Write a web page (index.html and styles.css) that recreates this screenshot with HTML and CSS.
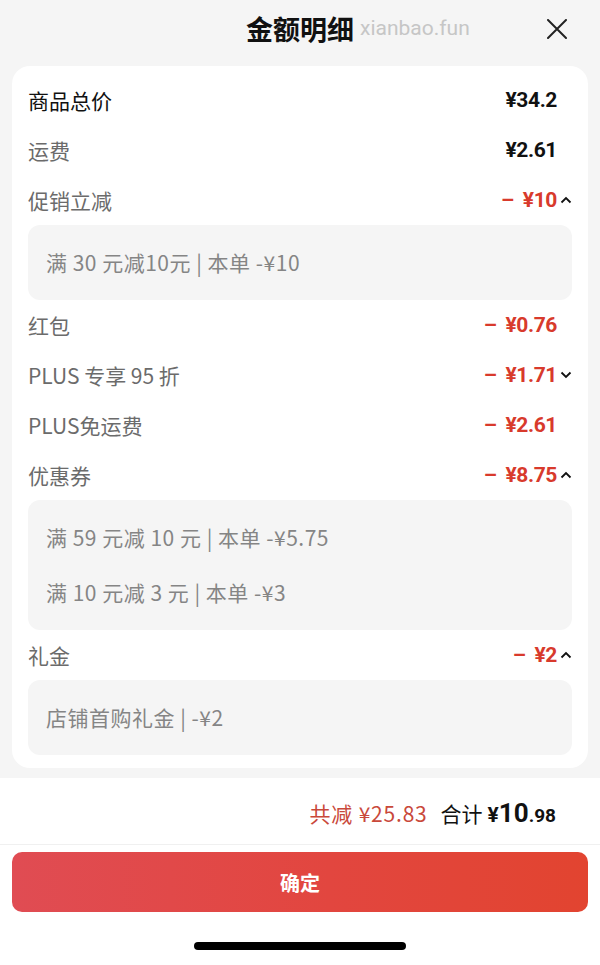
FILE: index.html
```html
<!DOCTYPE html>
<html lang="zh">
<head>
<meta charset="utf-8">
<link rel="stylesheet" href="styles.css">
</head>
<body>
<div class="sheet">
  <header class="head">
    <h1 class="title">金额明细</h1>
    <span class="watermark">xianbao.fun</span>
    <svg class="close" width="20" height="20" viewBox="0 0 20 20"><path d="M1 1L19 19M19 1L1 19" stroke="#222" stroke-width="2" fill="none" stroke-linecap="round"/></svg>
  </header>

  <section class="card">
    <div class="row"><span class="label dark">商品总价</span><span class="val">¥34.2</span><span class="chev"></span></div>
    <div class="row"><span class="label">运费</span><span class="val">¥2.61</span><span class="chev"></span></div>
    <div class="row"><span class="label">促销立减</span><span class="val red"><i class="minus">–</i>¥10</span><span class="chev"><svg width="12" height="8" viewBox="0 0 12 8"><path d="M1.5 6.5L6 2L10.5 6.5" stroke="#111" stroke-width="1.8" fill="none"/></svg></span></div>
    <div class="sub"><div class="item">满 30 元减10元 | 本单 -¥10</div></div>
    <div class="row"><span class="label">红包</span><span class="val red"><i class="minus">–</i>¥0.76</span><span class="chev"></span></div>
    <div class="row"><span class="label">PLUS 专享 95 折</span><span class="val red"><i class="minus">–</i>¥1.71</span><span class="chev"><svg width="12" height="8" viewBox="0 0 12 8"><path d="M1.5 1.5L6 6L10.5 1.5" stroke="#111" stroke-width="1.8" fill="none"/></svg></span></div>
    <div class="row"><span class="label">PLUS免运费</span><span class="val red"><i class="minus">–</i>¥2.61</span><span class="chev"></span></div>
    <div class="row"><span class="label">优惠券</span><span class="val red"><i class="minus">–</i>¥8.75</span><span class="chev"><svg width="12" height="8" viewBox="0 0 12 8"><path d="M1.5 6.5L6 2L10.5 6.5" stroke="#111" stroke-width="1.8" fill="none"/></svg></span></div>
    <div class="sub"><div class="item">满 59 元减 10 元 | 本单 -¥5.75</div><div class="item">满 10 元减 3 元 | 本单 -¥3</div></div>
    <div class="row"><span class="label">礼金</span><span class="val red"><i class="minus">–</i>¥2</span><span class="chev"><svg width="12" height="8" viewBox="0 0 12 8"><path d="M1.5 6.5L6 2L10.5 6.5" stroke="#111" stroke-width="1.8" fill="none"/></svg></span></div>
    <div class="sub"><div class="item">店铺首购礼金 | -¥2</div></div>
  </section>

  <footer class="foot">
    <div class="summary">
      <span class="saved">共减 ¥25.83</span>
      <span class="total">合计 <b class="yen">¥</b><b class="big">10</b><b class="small">.98</b></span>
    </div>
    <div class="btnwrap"><button class="btn">确定</button></div>
    <div class="home"></div>
  </footer>
</div>
</body>
</html>
```

FILE: styles.css
```css
* { box-sizing: border-box; }
html, body { margin: 0; padding: 0; }
body {
  width: 600px;
  height: 965px;
  background: #f5f5f5;
  font-family: "Noto Sans CJK SC", "Noto Sans", sans-serif;
  color: #111;
  overflow: hidden;
}
.sheet { display: flex; flex-direction: column; height: 965px; }
.head {
  position: relative;
  height: 66px;
  display: flex;
  align-items: flex-start;
  justify-content: center;
}
.title {
  margin: 9px 0 0 0;
  font-size: 27px;
  line-height: 40px;
  font-weight: 700;
  color: #111;
}
.watermark {
  position: absolute;
  left: 360px;
  top: 13px;
  font-family: "Roboto", "Noto Sans", sans-serif;
  font-size: 21px;
  line-height: 30px;
  color: #c6c6c6;
}
.close { position: absolute; left: 547px; top: 19px; }

.card {
  margin: 0 12px;
  background: #fff;
  border-radius: 18px;
  padding: 9px 16px 13px 16px;
}
.row {
  height: 50px;
  display: flex;
  align-items: center;
}
.label {
  flex: 1;
  font-size: 21px;
  color: #6b6b6b;
}
.label.dark { color: #111; }
.val {
  font-family: "Roboto", "Liberation Sans", sans-serif;
  font-weight: 700;
  font-size: 21px;
  color: #111;
  letter-spacing: -0.4px;
}
.val.red { color: #d83a2c; }
.minus { font-style: normal; margin-right: 9px; }
.chev {
  width: 15px;
  display: flex;
  justify-content: flex-end;
  align-items: center;
}
.sub {
  background: #f5f5f5;
  border-radius: 12px;
  padding: 10px 18px;
}
.item {
  height: 55px;
  line-height: 55px;
  font-size: 21px;
  letter-spacing: 0.5px;
  color: #858585;
}

.foot {
  margin-top: 10px;
  flex: 1;
  background: #fff;
  display: flex;
  flex-direction: column;
}
.summary {
  height: 67px;
  border-bottom: 1px solid #f0f0f0;
  display: flex;
  align-items: center;
  justify-content: flex-end;
  padding: 3px 44px 0 0;
  gap: 13px;
}
.saved { font-size: 21px; letter-spacing: 0.8px; color: #c9483a; }
.total { font-size: 21px; color: #111; display: flex; align-items: baseline; }
.total .yen { font-family: "Roboto", sans-serif; font-size: 21px; margin-left: 5px; }
.total .big { font-family: "Roboto", sans-serif; font-size: 26px; }
.total .small { font-family: "Roboto", sans-serif; font-size: 19px; }
.btnwrap { padding: 7px 12px 0 12px; }
.btn {
  width: 100%;
  height: 60px;
  border: none;
  border-radius: 10px;
  background: linear-gradient(90deg, #e04c53 0%, #e2463f 55%, #e24430 100%);
  color: #fff;
  font-family: "Noto Sans CJK SC", sans-serif;
  font-size: 20px;
  font-weight: 700;
}
.home {
  width: 212px;
  height: 8px;
  border-radius: 4px;
  background: #000;
  margin: 30px auto 0 auto;
}
```
